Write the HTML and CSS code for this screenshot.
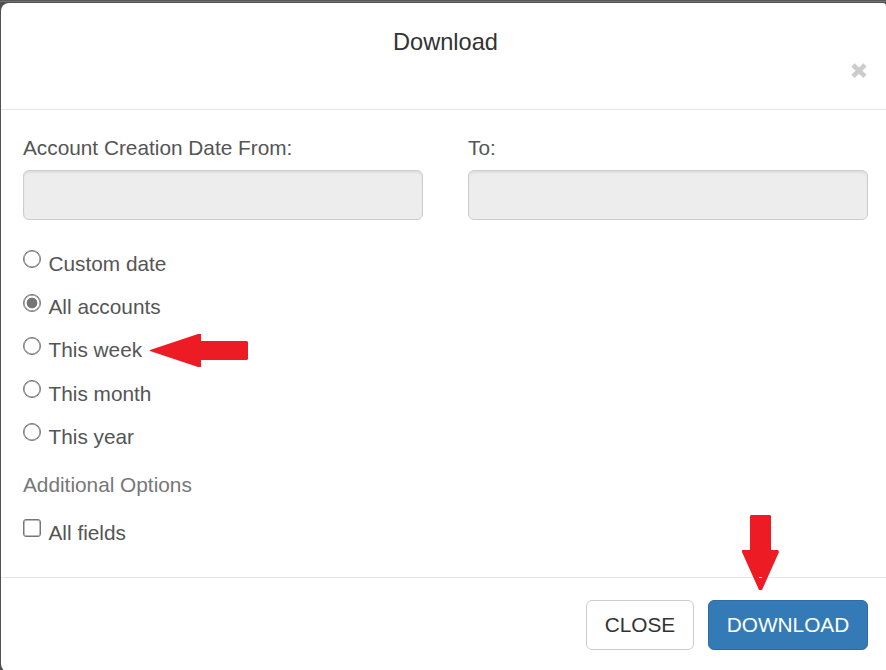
FILE: index.html
```html
<!DOCTYPE html>
<html lang="en">
<head>
<meta charset="utf-8">
<title>Download</title>
<link rel="stylesheet" href="styles.css">
</head>
<body>
<div class="modal">
  <header class="modal-header">
    <h1 class="title">Download</h1>
    <button class="dismiss" type="button" aria-label="Close">
      <svg width="16" height="16" viewBox="0 0 16 16"><path d="M2 2 14 13.4M14 2 2 13.4" stroke="#ccc" stroke-width="4.6"/></svg>
    </button>
  </header>
  <main class="modal-body">
    <div class="dates">
      <label class="field">Account Creation Date From:<input class="date" type="text" disabled></label>
      <label class="field">To:<input class="date" type="text" disabled></label>
    </div>
    <div class="choices">
      <label class="choice"><input class="radio" type="radio" name="range"><span>Custom date</span></label>
      <label class="choice"><input class="radio" type="radio" name="range" checked><span>All accounts</span></label>
      <label class="choice"><input class="radio" type="radio" name="range"><span>This week</span>
        <svg class="arrow-left" width="99" height="33" viewBox="0 0 99 33"><path d="M0 16 48 0H51V7H97L98 8V25L97 26H51V33H48L0 17Z" fill="#ed1c24"/></svg>
      </label>
      <label class="choice"><input class="radio" type="radio" name="range"><span>This month</span></label>
      <label class="choice"><input class="radio" type="radio" name="range"><span>This year</span></label>
    </div>
    <p class="section">Additional Options</p>
    <label class="choice"><input class="radio check" type="checkbox"><span>All fields</span></label>
  </main>
  <footer class="modal-footer">
    <button class="btn" type="button">CLOSE</button>
    <button class="btn primary" type="button">DOWNLOAD</button>
    <svg class="arrow-down" width="37" height="75" viewBox="0 0 37 75"><path d="M8 1 9 0H28L29 1V35H36L37 37 20 75H17L0 37V35H8Z" fill="#ed1c24"/><path d="M17 62.5H20" stroke="#fbdde0"/></svg>
  </footer>
</div>
</body>
</html>
```
FILE: styles.css
```css
* { box-sizing: border-box; }
body {
  margin: 0;
  height: 670px;
  padding: 3px 0 0 1px;
  overflow: hidden;
  background: #505052;
  box-shadow: inset 0 1px #575757, inset 0 2px #737373;
  font: 20.8px/30px "Liberation Sans", Arial, sans-serif;
  color: #555;
}
.modal {
  height: 669px;
  display: flex;
  flex-direction: column;
  background: #fff;
  border-radius: 8px 3px 0 8px;
}
.modal-header {
  height: 107px;
  padding: 22px 18px 0 22px;
  border-bottom: 1px solid #e5e5e5;
}
.title {
  margin: 0;
  text-align: center;
  font-size: 23.6px;
  line-height: 34px;
  font-weight: 400;
  color: #333;
}
.dismiss {
  display: block;
  margin: 4px 1px 0 auto;
  padding: 0;
  width: 16px;
  height: 16px;
  border: 0;
  background: none;
}
.dismiss svg { display: block; }
.modal-body {
  height: 468px;
  padding: 23px 18px 0 22px;
  border-bottom: 1px solid #e5e5e5;
}
.dates { display: flex; gap: 45px; }
.field { width: 400px; }
.date {
  display: block;
  width: 400px;
  height: 50px;
  margin-top: 7px;
  border: 1px solid #ccc;
  border-radius: 6px;
  background: #ededed;
  box-shadow: inset 0 2px 2px rgba(0, 0, 0, .06);
}
.choices { margin-top: 29px; }
.choice {
  position: relative;
  display: flex;
  align-items: flex-start;
  gap: 7.5px;
  height: 43.2px;
}
.radio {
  appearance: none;
  flex: none;
  width: 18px;
  height: 18px;
  margin: 1.4px 0 0;
  border: 1px solid #767676;
  border-radius: 50%;
  background: #fff;
  box-shadow: inset 0 0 0 .5px #767676;
}
.radio:checked { background: radial-gradient(circle, #767676 5px, #fff 5.7px); }
.check { border-radius: 3px; }
.arrow-left { position: absolute; left: 127px; top: -1px; }
.section { margin: 5px 0 18px; color: #777; }
.modal-footer {
  position: relative;
  display: flex;
  justify-content: flex-end;
  gap: 14px;
  padding: 22px 18px 0 0;
}
.btn {
  width: 108px;
  height: 50px;
  padding: 0;
  border: 1px solid #ccc;
  border-radius: 6px;
  background: #fff;
  color: #333;
  font: 20.8px/30px "Liberation Sans", Arial, sans-serif;
}
.primary { width: 160px; border-color: #2e6da4; background: #337ab7; color: #fff; }
.arrow-down { position: absolute; left: 741px; top: -63px; }
```
